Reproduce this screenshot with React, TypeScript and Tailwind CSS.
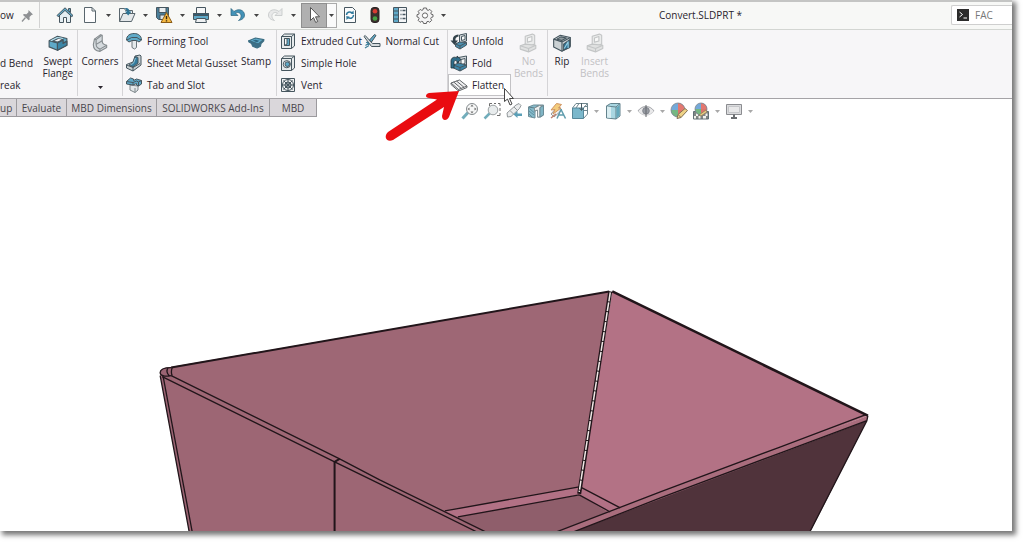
import type { ReactNode } from "react";

const ink = "#46565f";
const blue = "#5fa9c8";
const steel = "#d5dade";

type IconProps = { size?: number; children: ReactNode };

function Icon({ size = 18, children }: IconProps) {
  return (
    <svg
      width={size}
      height={size}
      viewBox="0 0 18 18"
      fill="none"
      stroke={ink}
      strokeWidth="1"
      strokeLinejoin="round"
      aria-hidden="true"
      className="shrink-0"
    >
      {children}
    </svg>
  );
}

const icons = {
  home: (
    <Icon>
      <path d="M3.500 8.500v8h4v-5h3v5h4v-8L9 3.500z" fill="#e4eef2" />
      <path d="M12.500 2.500h2v4l-2-2z" fill={blue} />
      <path d="M1 9.500 9 1.800l8 7.700-1.200 1.200L9 4.400l-6.800 6.300z" fill={blue} />
    </Icon>
  ),
  page: (
    <Icon>
      <path d="M3.500 1.500h7.500l3.500 3.500v11.500h-11z" fill="#fdfdfd" stroke="#59666d" />
      <path d="M11 1.500v3.500h3.500" stroke="#59666d" />
    </Icon>
  ),
  open: (
    <Icon>
      <path d="M1.500 15.500v-13h5l1 2h7v3" fill="#f2f3f3" stroke="#59666d" />
      <path d="m1.500 15.500 3.500-8h12l-3.500 8z" fill="#e4e8ea" stroke="#59666d" />
      <path d="M6 2.500c3-1.500 5.500 0 5.500 3h2l-3.300 4-3.300-4h2c0-1.500-1-2.500-2.900-3z" fill="#2f7595" stroke="none" />
    </Icon>
  ),
  save: (
    <Icon>
      <path d="M1.500 1.500h12v12h-10l-2-2z" fill="#4a7f99" />
      <path d="M4 1.500h7v5H4z" fill="#e9eef0" />
      <path d="M5 9h5v4.500H5z" fill="#dfe5e8" />
      <path d="m11.500 6.500 5.500 10H6z" fill="#f5b942" stroke="#8a5c17" />
      <path d="M11.500 10v3.200m0 1v1.300" stroke="#3a2a10" strokeWidth="1.400" />
    </Icon>
  ),
  print: (
    <Icon>
      <path d="M4.500 1.500h9v6h-9z" fill="#f4f6f7" />
      <path d="M1.500 7.500h15v6h-15z" fill={blue} />
      <path d="M1.500 7.500h15v2h-15z" fill="#315c72" />
      <path d="M4.500 12.500h9l1 4h-11z" fill="#eef1f2" />
    </Icon>
  ),
  undo: (
    <Icon>
      <path d="M2 2.500v7h7L6.500 7c3-1.500 6 .5 5.500 3.500-.2 1.700-1 2.700-2.500 4 4-.8 6-2.500 6-5.500 0-5-6-7-10.500-3.500z" fill="#4393b8" stroke="#2c637c" strokeWidth=".7" />
    </Icon>
  ),
  redo: (
    <Icon>
      <path d="M16 2.500v7H9L11.500 7c-3-1.500-6 .5-5.500 3.500.2 1.700 1 2.700 2.500 4-4-.8-6-2.500-6-5.500 0-5 6-7 10.500-3.500z" fill="#e8e9e9" stroke="#c3c6c6" strokeWidth=".8" />
    </Icon>
  ),
  pointer: (
    <Icon>
      <path d="M5.500 1.500v13l3-3 2.200 5 2-1-2.200-4.700h4z" fill="#fff" stroke="#555" />
    </Icon>
  ),
  rebuild: (
    <Icon>
      <path d="M3.500 1.500h8l3 3v12h-11z" fill="#fafbfb" />
      <path d="M5.500 9c0-2.500 3-4 5.500-2.200M12.500 9c0 3-3 4-5.500 2.500" stroke="#2d789b" strokeWidth="1.500" />
      <path d="m12.500 4.500.3 3.800-3.300-.7zM5.500 14l-.2-4 3.400.8z" fill="#2d789b" stroke="none" />
    </Icon>
  ),
  traffic: (
    <Icon>
      <rect x="5" y="1.500" width="8" height="15" rx="3" fill="#3b2f2d" stroke="#2b2423" />
      <circle cx="9" cy="5.200" r="2.300" fill="#d83b32" stroke="none" />
      <circle cx="9" cy="12.500" r="2.300" fill="#46a243" stroke="none" />
    </Icon>
  ),
  options: (
    <Icon>
      <path d="M2.500 1.500h13v15h-13z" fill="#f4f6f7" />
      <path d="M3 2h4v14H3z" fill={blue} stroke="none" />
      <path d="M7.500 1.500v15M2.500 5h5m-5 4h5m-5 4h5" />
      <path d="M9.500 4.500h1m1 0h3m-5 4h1m1 0h3m-5 4h1m1 0h3" strokeWidth="1.500" />
    </Icon>
  ),
  gear: (
    <Icon>
      <path d="M7.500 2h3l.4 1.800 1.300.6 1.600-1 2 2-1 1.600.5 1.300 1.700.4v2.200l-1.700.5-.6 1.300 1 1.600-2 2-1.600-1-1.300.5-.4 1.700H7.500l-.5-1.700-1.300-.5-1.600 1-2-2 1-1.600-.5-1.300-1.600-.5V8.700l1.700-.4.5-1.300-1-1.600 2-2 1.600 1L7 3.800z" fill="#f4f4f4" stroke="#666" />
      <circle cx="9" cy="9.500" r="2.600" fill="#fff" stroke="#666" />
    </Icon>
  ),
  sweptFlange: (
    <Icon size={20}>
      <path d="m1 7 7.500-4 8.500 2v6l-8.500 4.500L1 12.500z" fill={blue} />
      <path d="m4 7.500 5.500-2.700 4 1L9 8.200z" fill="#f7f6f8" />
      <path d="M1 7 8.500 9v6.500M13.500 5.800V9l3.500-1.500" />
      <path d="m2.500 7 6-3 5 1" stroke="#b8dce8" />
      <path d="m8.500 9 5-2.500v3L17 7.500V11l-8.500 4.500z" fill="#3c86a7" />
    </Icon>
  ),
  corners: (
    <Icon size={20}>
      <path d="m4 5.500 5.500-4L11 2v5.500c0 2 1 3 4 3.500v2L9 16.500c-4-.5-6-3-6-6z" fill={steel} stroke="#858b8f" />
      <path d="m5.500 6 5-4M4 5.500l1.500.5v4c0 2.500 1.500 4 3.500 4.500l6-3.500M9 14.500v2M6 10l5-3" stroke="#858b8f" />
    </Icon>
  ),
  formingTool: (
    <Icon>
      <path d="M7 8.500h4.500v7L9.500 17 7 15.500z" fill="#e4e9eb" stroke="#6a767c" />
      <path d="M1.500 8C1.500 3.500 5 1.500 9.200 1.500S16.500 4 16.500 8l-2.500 2-2.500-1.500H7L4 10z" fill={blue} />
      <path d="M1.500 8 4 7l2.500-1.500h5.500L14 7l2.500 1" />
    </Icon>
  ),
  gusset: (
    <Icon>
      <path d="M1.500 10.500 8 8l2-6 5-1 1 1v9L8 17l-6.500-3z" fill="#c9d0d3" />
      <path d="M1.500 11 8 13.500l7-4M8 13.500V17" />
      <path d="m4 11 4-2 2.500-6.500 2.500 1V9l-5 4z" fill="#357c9e" />
      <path d="m5.500 10.800 3-1.600 2-5.200" stroke="#8bc4da" />
    </Icon>
  ),
  tabSlot: (
    <Icon>
      <path d="m5 9 8 1v4l-3 2.500L5 14z" fill="#e3e7e9" stroke="#7d868b" />
      <path d="m1.500 5.500 4-3.500 3 1v1.500l3-1.500 5 1.500V8l-3 2-2-1V7.500L8 9 1.500 8z" fill={blue} />
      <path d="M1.500 5.500 8 6.500l3.500-1.500 2 1 3-1.500M8 6.500V9m5.500-3v4" />
      <path d="M10 16.500V12" stroke="#7d868b" />
    </Icon>
  ),
  stamp: (
    <Icon size={20}>
      <path d="m2.500 7 6-2.500 7.500 1.500-5 4z" fill={blue} stroke="#3d6e84" />
      <path d="M2.500 7v1l2.500 1.500 1 2.500 4 1.500 3-1.500.5-2.500L16 7V6l-5 4z" fill="#3c6f88" stroke="#3d6e84" />
      <path d="m6 7 2.500-1 3.500 1-2 1.300z" fill="#2f6680" stroke="none" />
    </Icon>
  ),
  extrudedCut: (
    <Icon>
      <path d="m2.500 4.500 3-2.500h10v12l-3 2.500h-10z" fill="#e6eaec" />
      <path d="M2.500 4.500h10v12M12.500 4.500l3-2.500" />
      <path d="M5.500 6.500h5v7h-5z" fill={blue} />
      <path d="M5.500 13.500V6.500h2.500v5.500z" fill="#f5f8f9" />
    </Icon>
  ),
  simpleHole: (
    <Icon>
      <path d="m2.500 4.500 3-2.500h10v12l-3 2.500h-10z" fill="#e6eaec" />
      <path d="M2.500 4.500h10v12M12.500 4.500l3-2.500" />
      <circle cx="7.800" cy="10.200" r="3.600" fill="#f3f5f6" />
      <circle cx="8.300" cy="10.200" r="2.300" fill={blue} />
    </Icon>
  ),
  vent: (
    <Icon>
      <path d="M2.500 2.500h13v13h-13z" fill="#eeeff0" />
      <circle cx="9" cy="9" r="5.500" />
      <circle cx="9" cy="9" r="3" />
      <path d="M9 2.500v13M2.500 9h13m-11-4.500 9 9m0-9-9 9" />
      <circle cx="9" cy="9" r="1" fill={ink} />
    </Icon>
  ),
  normalCut: (
    <Icon>
      <path d="m1 4.500 1.200-1 7.300 8h7.500v3H8.500z" fill={steel} />
      <path d="m6.500 8 5-5.500 1.500 1L8.500 10z" fill={blue} />
      <path d="M3 10.500c1.500-.5 3 .5 3 2.500M2.500 13.500 6 11m-4 5 4-2.500" stroke="#3f7f9b" strokeWidth="1.200" />
    </Icon>
  ),
  unfold: (
    <Icon>
      <path d="M9.500 3 16.500 1.500v7.500l-7 2z" fill={steel} />
      <path d="M11.500 4.500 15 3.500v4l-3.500 1z" fill="#f7f8f8" />
      <path d="m5.500 12 4-2 7 .5V13L10 17l-4.500-2.500z" fill="#4b8eae" />
      <path d="m5.500 12 4.500 2 6.500-3.500M10 14v3" />
      <path d="M8.500 2.500C4 3 2.500 5 3 8.500H.5L4.500 13 8 8.500H5.500C5 6.500 6 5 8.500 4.500z" fill="#33424b" stroke="none" />
    </Icon>
  ),
  fold: (
    <Icon>
      <path d="M8.500 3.500 16.500 2v10L11 16l-2.500-3z" fill={steel} />
      <path d="m11 5.500 4-1v5l-4 1.500z" fill="#f7f8f8" />
      <path d="m3.500 11 5-2 8 2v2.500L10 17l-6.500-3z" fill="#3d86a8" />
      <path d="m3.500 11 6.500 2.500 6.500-2.500M10 13.500V17" />
      <path d="M1 14V7c0-3 3-5 6-3V2l4 3.500L7 9V7C5 6 4 7 4 8.500V14z" fill="#2f6e8b" stroke="#22323a" strokeWidth=".8" />
    </Icon>
  ),
  flatten: (
    <Icon>
      <path d="m1 7 8.500-3 7.500 6-8.500 3.500z" fill="#f1f1f2" stroke="#606468" />
      <path d="m3.700 6 7.500 6.400M6.500 5l7.500 6.300M1 7v1.500l7.500 6.500 8.500-3.500V10M8.500 13.500V15" stroke="#606468" />
    </Icon>
  ),
  noBends: (
    <Icon size={20}>
      <g stroke="#c3c5c6">
        <path d="m6.500 3 6.500-2 2 1v8l-5 2-3.500-1z" fill="#eaebeb" />
        <path d="m8.500 4.500 4-1.300v4l-4 1z" fill="#f8f8f8" />
        <path d="m2 11.500 4.500-1.500 9.500 1v3L9.500 17 2 14.500z" fill="#e0e1e1" />
        <path d="m2 11.500 7.500 2.500 6.500-3m-6.500 3V17" />
      </g>
    </Icon>
  ),
  rip: (
    <Icon size={20}>
      <path d="m1.500 5.500 6-3.500 9 2v8L9 16.500l-7.500-4z" fill="#cbd1d4" />
      <path d="m1.500 5.500 7.500 2.500 7.500-4M9 8v8.500" />
      <path d="m4.500 5.500 3.500-2 5 1-4.200 2.200z" fill="#8f9a9f" />
      <path d="m10.500 15.500V10L16 6v7z" fill="#2d7294" />
      <path d="m11 14 3.500-6v5.500" stroke="#99cde1" />
    </Icon>
  ),
  zoomFit: (
    <Icon>
      <path d="m7 10.500-5.500 6" stroke="#5a9fb0" strokeWidth="3" />
      <circle cx="11" cy="7" r="5.500" fill="#f5f6f6" stroke="#70777a" />
      <path d="m11 2.500 1.500 2h-3zm0 9 1.500-2h-3zM6.500 7l2-1.500v3zm9 0-2-1.500v3z" fill="#555" stroke="none" />
    </Icon>
  ),
  zoomArea: (
    <Icon>
      <path d="M6.500 4V1.500H9m2 0h2m2 0h2V4m0 2v3m0 2v2.500h-3" stroke="#555" />
      <path d="m7 11-5.500 5.500" stroke="#5a9fb0" strokeWidth="2.500" />
      <circle cx="10" cy="8" r="4.800" fill="#e5e9ea" stroke="#8a9092" />
    </Icon>
  ),
  previousView: (
    <Icon>
      <path d="m2 11 9-8 3-1.500 2 2-1.500 3-8.500 8-3.500.5z" fill="#e7e9ea" stroke="#81888b" />
      <path d="m9 5 3.500 3.500M5 8.500l4 4" stroke="#81888b" />
      <path d="m8.500 12.500 4-3.500v2.500H17v2.500h-4.500v2z" fill="#3f8fab" stroke="none" />
    </Icon>
  ),
  section: (
    <Icon>
      <path d="m1.500 5 5-2h10v10l-3 2h-3V8L8 9v7l-6.500-1.500z" fill="#70b0c3" stroke="#527885" />
      <path d="m1.500 5 6 1 4-2.500" stroke="#426773" />
      <path d="m2 9 5 4M2 12l3 3M2.500 6.500l4.500 4" stroke="#376d81" strokeWidth=".8" />
      <path d="m7.500 6 5-2.500h4L13 5.500V15h-2.500V8L7.500 9z" fill="#e9eded" stroke="#718085" />
      <path d="m13 5.500 3.500-2V13L13 15z" fill="#6ba9bc" stroke="#527885" />
    </Icon>
  ),
  annotations: (
    <Icon>
      <path d="m2 12 7-8 4 4-8 7z" fill="#ebecec" stroke="#85888a" />
      <path d="m2 8 5.500-6.500 5 1L9.500 6H12L4 12l2-4.500z" fill="#f2c467" stroke="#c98245" />
      <path d="m8 16.500 4-9 4.500 9M9.500 13h5" stroke="#438b9f" strokeWidth="1.500" />
      <path d="m2 16 5-4" stroke="#b66a54" strokeWidth="1.500" />
    </Icon>
  ),
  viewOrientation: (
    <Icon>
      <path d="M5 1.500h11.500V12M5 1.500 1.500 6m11 0 4-4.500m-4 15L16.500 12M8 1.500 5 6m8-1.500h3.500M13 8.500h3.500" stroke="#58737c" />
      <path d="M1.500 6h11v10.500h-11z" fill="#63abc2" stroke="#397388" />
      <path d="M10.500 1v7m-2-2 2 2.500 2-2.500" stroke="#2d424c" />
    </Icon>
  ),
  displayStyle: (
    <Icon>
      <path d="m2.500 4 4-2.500h9.500V14l-4 3-9.500-1z" fill="#9bd0dc" stroke="#486d79" />
      <path d="m2.500 4 9.500 1v12M12 5l4-3.500" stroke="#486d79" />
      <path d="m3 4.500 4 .5v11l-4-.5z" fill="#d3eaef" stroke="none" />
      <path d="m12.500 5.500 3-2.500v10.500l-3 2.500z" fill="#4a99b0" stroke="none" />
    </Icon>
  ),
  hideShow: (
    <Icon>
      <path d="M1 9c4-6 12-6 16 0-4 5.500-12 5.500-16 0z" fill="#e6e6e7" stroke="#c4c5c8" />
      <path d="M1 9c4-6 12-6 16 0" stroke="#9fa1a6" />
      <circle cx="9" cy="8.800" r="3.300" fill="#858a93" stroke="#6c7078" />
      <path d="M9 3v12" stroke="#4a4e55" />
    </Icon>
  ),
  appearance: (
    <Icon>
      <Ball cx={8} cy={8} r={7} />
      <path d="m7 16.500 1-4 7-6 2.500 2-6.500 7z" fill="#eccb72" stroke="#705a39" />
      <path d="m8 12.500 3 3" stroke="#705a39" />
    </Icon>
  ),
  scene: (
    <Icon>
      <path d="M1.500 9.500h15v7.500h-15z" fill="#6b716f" />
      <path d="M2 14h2v2.500H2zm4.500 0h2v2.500h-2zM11 14h3v2.500h-3zM4 11.500h2V14H4zm9.500 0h2V14h-2z" fill="#f1f1ec" stroke="none" />
      <Ball cx={9} cy={7} r={6} />
      <path d="m7 13 7-5 1 2-6 4z" fill="#e3c46c" stroke="#766039" strokeWidth=".7" />
    </Icon>
  ),
  monitor: (
    <Icon>
      <path d="M1.500 2.500h15v10h-15z" fill="#d4d5d8" stroke="#77797d" />
      <path d="M3.500 4.500h11v6h-11z" fill="#e4e4e6" stroke="#bbbdc0" />
      <path d="M9 12.500v3m-3 .5h6" stroke="#515458" strokeWidth="2" />
    </Icon>
  ),
};

function Ball({ cx, cy, r }: { cx: number; cy: number; r: number }) {
  return (
    <g stroke="none">
      <circle cx={cx} cy={cy} r={r} fill="#5b9bd3" />
      <path d={`M${cx} ${cy}V${cy - r}A${r} ${r} 0 0 1 ${cx + r} ${cy}z`} fill="#df6158" />
      <path d={`M${cx} ${cy}H${cx + r}A${r} ${r} 0 0 1 ${cx} ${cy + r}z`} fill="#d75b52" />
      <path d={`M${cx} ${cy}V${cy + r}A${r} ${r} 0 0 1 ${cx - r} ${cy}z`} fill="#5eab6d" />
      <circle cx={cx} cy={cy} r={r} stroke="#6a6f78" strokeWidth=".8" />
    </g>
  );
}

function Caret() {
  return (
    <svg width="5" height="3" viewBox="0 0 5 3" fill="currentColor" aria-hidden="true">
      <path d="M0 0h5L2.500 3z" />
    </svg>
  );
}

function QuickButton({ label, icon, menu }: { label: string; icon: ReactNode; menu?: boolean }) {
  return (
    <div className="flex shrink-0 items-center">
      <button type="button" aria-label={label} className="flex w-6 justify-center">
        {icon}
      </button>
      {menu && (
        <button type="button" aria-label={`${label} menu`} className="flex h-4 w-[13px] items-center justify-center">
          <Caret />
        </button>
      )}
    </div>
  );
}

function RowCommand({ label, icon }: { label: string; icon: ReactNode }) {
  return (
    <button type="button" className="flex h-[22px] items-center gap-1 whitespace-nowrap">
      {icon}
      {label}
    </button>
  );
}

function TallCommand({ lines, icon, disabled }: { lines: string[]; icon: ReactNode; disabled?: boolean }) {
  return (
    <button
      type="button"
      disabled={disabled}
      className="flex flex-col items-center self-start pt-[3px] leading-3 disabled:text-[#c2c1c4]"
    >
      <span className="mb-[2px]">{icon}</span>
      {lines.map((line) => (
        <span key={line} className="whitespace-nowrap">{line}</span>
      ))}
    </button>
  );
}

function ViewButton({ label, icon, menu }: { label: string; icon: ReactNode; menu?: boolean }) {
  return (
    <div className="flex shrink-0 items-center">
      <button type="button" aria-label={label} className="flex w-[22px] justify-center">
        {icon}
      </button>
      {menu && (
        <button type="button" aria-label={`${label} menu`} className="flex h-4 w-[11px] items-center justify-center text-[#999]">
          <Caret />
        </button>
      )}
    </div>
  );
}

function TitleBar() {
  return (
    <header className="flex h-[30px] items-center border-t-2 border-b border-t-[#c4c5c4] border-b-[#d3d6d2] bg-[#f7f8f6] pb-px">
      <button type="button" className="w-4 shrink-0 text-left">ow</button>
      <button type="button" aria-label="Pin menu" className="flex w-6 shrink-0 items-center justify-center self-stretch border-r border-[#d2d3d2]">
        <svg width="13" height="13" viewBox="0 0 13 13" aria-hidden="true">
          <path d="m7.500 1 4.500 4.500-1.500.5-2 2 .2 2.500-1 .8L2 6l.8-1 2.600.2 2-2z" fill="#8e9193" />
          <path d="m4.500 8.500-3.500 4" stroke="#8e9193" strokeWidth="1.300" />
        </svg>
      </button>
      <div className="ml-[13px] flex shrink-0 items-center text-[#444]">
        <QuickButton label="Home" icon={icons.home} />
        <div className="flex pl-px">
          <QuickButton label="New" icon={icons.page} menu />
          <QuickButton label="Open" icon={icons.open} menu />
          <QuickButton label="Save" icon={icons.save} menu />
          <QuickButton label="Print" icon={icons.print} menu />
          <QuickButton label="Undo" icon={icons.undo} menu />
          <QuickButton label="Redo" icon={icons.redo} menu />
        </div>
        <button type="button" aria-label="Select" className="ml-px flex h-[25px] w-[26px] items-center justify-center border border-[#8f8f8f] bg-[#b0b0b0]">
          {icons.pointer}
        </button>
        <button type="button" aria-label="Select menu" className="flex h-[25px] w-[10px] items-center justify-center border border-l-0 border-[#aaa] bg-[#fafafa]">
          <Caret />
        </button>
        <div className="ml-px flex gap-px">
          <QuickButton label="Rebuild" icon={icons.rebuild} />
          <QuickButton label="Selection filter" icon={icons.traffic} />
          <QuickButton label="File properties" icon={icons.options} />
          <QuickButton label="Options" icon={icons.gear} menu />
        </div>
      </div>
      <h1 className="flex-1 text-center">Convert.SLDPRT *</h1>
      <label className="flex h-5 w-[61px] shrink-0 items-center gap-[6px] rounded-l-xs border border-r-0 border-[#cfcfcf] bg-white pl-[5px]">
        <svg width="12" height="12" viewBox="0 0 12 12" role="img" aria-label="Search commands">
          <path d="M0 0h12v12H0z" fill="#2b2b2b" />
          <path d="m2.500 3 3 2.500-3 2.500M6.500 9H10" fill="none" stroke="#fff" />
        </svg>
        <input type="text" defaultValue="FAC" className="w-8 bg-transparent text-[#777] outline-none" />
      </label>
    </header>
  );
}

function Ribbon() {
  return (
    <section aria-label="Sheet Metal" className="flex h-[69px] border-b border-[#a5a3a7] bg-[#f7f6f8] pb-[2px] [&>div]:border-r [&>div]:border-[#d5d4d7] [&>div:last-child]:border-r-0">
      <div className="flex w-[78px] shrink-0 justify-between pr-1">
        <div className="flex flex-col pt-[22px]">
          <button type="button" className="h-[22px] whitespace-nowrap text-left">d Bend</button>
          <button type="button" className="h-[22px] text-left">reak</button>
        </div>
        <TallCommand lines={["Swept", "Flange"]} icon={icons.sweptFlange} />
      </div>
      <div className="flex w-[45px] shrink-0 flex-col items-center">
        <div className="flex">
          <TallCommand lines={["Corners"]} icon={icons.corners} />
        </div>
        <button type="button" aria-label="Corners menu" className="mt-auto flex h-[18px] items-center">
          <Caret />
        </button>
      </div>
      <div className="flex w-[154px] shrink-0 justify-between pr-[5px] pl-[2px]">
        <div>
          <RowCommand label="Forming Tool" icon={icons.formingTool} />
          <RowCommand label="Sheet Metal Gusset" icon={icons.gusset} />
          <RowCommand label="Tab and Slot" icon={icons.tabSlot} />
        </div>
        <TallCommand lines={["Stamp"]} icon={icons.stamp} />
      </div>
      <div className="flex w-[171px] shrink-0 items-start justify-between pr-2 pl-[2px]">
        <div>
          <RowCommand label="Extruded Cut" icon={icons.extrudedCut} />
          <RowCommand label="Simple Hole" icon={icons.simpleHole} />
          <RowCommand label="Vent" icon={icons.vent} />
        </div>
        <RowCommand label="Normal Cut" icon={icons.normalCut} />
      </div>
      <div className="flex w-[100px] shrink-0 justify-between pr-1">
        <div className="w-[63px] shrink-0">
          <div className="pl-[2px]">
            <RowCommand label="Unfold" icon={icons.unfold} />
            <RowCommand label="Fold" icon={icons.fold} />
          </div>
          <div className="relative">
            <button type="button" className="flex h-[22px] w-full items-center gap-1 border border-[#c3c2c5] bg-white pl-px">
              {icons.flatten}
              Flatten
            </button>
            <svg width="78" height="56" viewBox="0 0 78 56" className="pointer-events-none absolute top-[15px] right-[50px] z-10" aria-hidden="true">
              <path d="M76 2 46 4c-4 1-4 5 0 5l8 1.500L5 43c-5 5-1 11 5 8l51-33-2 9c0 5 5 5 7 1z" fill="#e90c10" />
            </svg>
            <svg width="11" height="18" viewBox="0 0 11 18" className="pointer-events-none absolute top-[14px] -right-1 z-10" aria-hidden="true">
              <path d="M.5.5v13l3-2.500 2.500 6 2-1-2.500-5.500h4z" fill="#fff" stroke="#444" />
            </svg>
          </div>
        </div>
        <TallCommand lines={["No", "Bends"]} icon={icons.noBends} disabled />
      </div>
      <div className="flex gap-2 pl-1">
        <TallCommand lines={["Rip"]} icon={icons.rip} />
        <TallCommand lines={["Insert", "Bends"]} icon={icons.noBends} disabled />
      </div>
    </section>
  );
}

function Tab({ label, width }: { label: string; width: string }) {
  return (
    <button
      type="button"
      className={`${width} h-[18px] shrink-0 border-r border-b border-[#9c9a9e] bg-[#dad7db] whitespace-nowrap text-[#48464b]`}
    >
      {label}
    </button>
  );
}

function ViewBar() {
  return (
    <div className="flex items-start">
      <nav className="flex" aria-label="Command tabs">
        <Tab label="up" width="w-[17px] pr-[6px] text-right" />
        <Tab label="Evaluate" width="w-[50px]" />
        <Tab label="MBD Dimensions" width="w-[90px]" />
        <Tab label="SOLIDWORKS Add-Ins" width="w-[113px]" />
        <Tab label="MBD" width="w-[47px]" />
      </nav>
      <div role="toolbar" aria-label="View" className="ml-[142px] flex pt-[3px] opacity-85">
        <ViewButton label="Zoom to fit" icon={icons.zoomFit} />
        <ViewButton label="Zoom to area" icon={icons.zoomArea} />
        <ViewButton label="Previous view" icon={icons.previousView} />
        <ViewButton label="Section view" icon={icons.section} />
        <ViewButton label="Dynamic annotation views" icon={icons.annotations} />
        <ViewButton label="View orientation" icon={icons.viewOrientation} menu />
        <ViewButton label="Display style" icon={icons.displayStyle} menu />
        <ViewButton label="Hide or show items" icon={icons.hideShow} menu />
        <ViewButton label="Edit appearance" icon={icons.appearance} />
        <ViewButton label="Apply scene" icon={icons.scene} menu />
        <ViewButton label="View settings" icon={icons.monitor} menu />
      </div>
    </div>
  );
}

function Model() {
  return (
    <svg
      viewBox="0 121 1012 410"
      preserveAspectRatio="xMidYMax slice"
      className="min-h-0 w-full flex-1"
      role="img"
      aria-label="Sheet metal part"
      fill="none"
      stroke="#21151a"
      strokeWidth="1.300"
    >
      <g stroke="none">
        <path d="M172 368c-8 0-11 2-11 5v3l29 156h30V380z" fill="#9b6473" />
        <path d="m168 368 441-76-30 199-120 60H220l-48-175z" fill="#9e6775" />
        <path d="m612 292 255 124-250 96-37-22z" fill="#b37285" />
        <path d="m458 517 121-22 33 18-55 30H486z" fill="#8f5e6b" />
        <path d="m445 511 134-24 41 21-11 5-30-18-121 22z" fill="#b27185" />
        <path d="m163 376 172 85 151 72H192z" fill="#9d6674" />
        <path d="m867 416-1 5-292 112h-22z" fill="#a96d7d" />
        <path d="m866 421-57 112H570z" fill="#50333b" />
      </g>
      <path d="m172 368 437-76" strokeWidth="2" />
      <path d="m612 292 255 124" strokeWidth="2.500" />
      <path d="m172 376 168 83 40 21 106 52M163 377l172 85 45 22 97 48" />
      <path d="m335 462 5-3m-5 3v70" strokeWidth="2" />
      <path d="M172 368c-8 0-11 2-11 5 0 4 6 4 11 3m-3-8c-2 3-1 6 1 8m3-8c-1 3-1 6 0 8" />
      <path d="m161 376 29 156m-26-155 29 155" />
      <path d="m445 511 134-24m-121 30 121-22m1-8 40 21m-41-13 31 17" />
      <path d="m610 292-31 202" strokeWidth="4" />
      <path d="m610 293-31 199" stroke="#f1e9e7" strokeWidth="1.500" strokeDasharray="9 1" />
      <path d="m556 532 104-40 120-45 85-32M573 532l87-34 120-45 86-32m1-5-1 5-57 111" />
    </svg>
  );
}

export default function App() {
  return (
    <div className="h-screen min-h-96 overflow-hidden bg-white pr-3 pb-[13px] font-['Open_Sans','Noto_Sans',sans-serif] text-[10px] leading-3 text-[#29242d]">
      <main className="flex h-full flex-col bg-white shadow-[3px_3px_5px_1px_#777]">
        <TitleBar />
        <Ribbon />
        <ViewBar />
        <Model />
      </main>
    </div>
  );
}
